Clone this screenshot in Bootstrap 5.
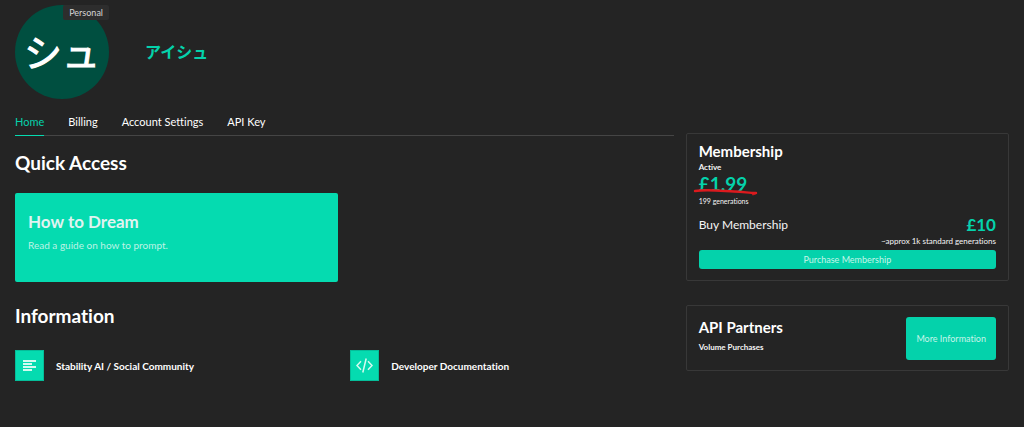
<!DOCTYPE html>
<html lang="en" data-bs-theme="dark">
<head>
<meta charset="utf-8">
<meta name="viewport" content="width=device-width, initial-scale=1">
<title>Account</title>
<link href="https://cdn.jsdelivr.net/npm/bootstrap@5.3.0/dist/css/bootstrap.min.css" rel="stylesheet">
<style>
  :root { --accent: #05dbb0; --accent-deep: #04d2ab; --line: #383838; }
  body { background: #242424; color: #f5f5f5; font-family: Lato, "Noto Sans CJK JP", sans-serif; font-size: 11px; line-height: 16px; font-variant-ligatures: none; }
  .page { padding: 5px 15px; }
  .row { --bs-gutter-x: 12px; }
  .avatar { width: 94px; height: 94px; background: #004f40; color: #fff; font-size: 38px; font-weight: 400; line-height: 1; -webkit-text-stroke: 1px #fff; }
  .plan-tag { top: 0; right: 0; padding: 0 6px; background: #2d2d2d; color: #d4d4d4; font-size: 9px; line-height: 15px; border-radius: 2px; }
  .user-name { margin-left: 36px; color: var(--accent-deep); font-size: 16px; line-height: 20px; font-weight: 700; }
  .tabs { gap: 24px; border-bottom: 1px solid #454545; padding-top: 10px; }
  .tabs .nav-link { padding: 5px 0; color: #fff; font-size: 11px; line-height: 16px; border-bottom: 1px solid transparent; margin-bottom: -1px; transition: none; }
  .tabs .nav-link.active { color: var(--accent-deep); border-bottom-color: var(--accent); }
  h2 { font-size: 19px; line-height: 24px; font-weight: 700; color: #fff; }
  h3 { font-size: 15px; line-height: 20px; font-weight: 700; color: #fff; }
  .access { margin-top: 15px; }
  .access h2 { margin-bottom: 18px; }
  .quick { background: var(--accent); border-radius: 2px; padding: 18px 13px; min-height: 89px; color: #bdf3e5; font-size: 10px; }
  .quick:hover { color: #fff; }
  .quick h3 { color: #e0f3f1; font-size: 17px; line-height: 22px; }
  .resources { margin-top: 22px; }
  .resources h2 { margin-bottom: 22px; }
  .info { gap: 12px; color: #fff; font-size: 10px; line-height: 14px; font-weight: 700; }
  .info:hover { color: #fff; }
  .tile { width: 29px; height: 31px; background: var(--accent); box-shadow: inset 0 0 0 1px #05bd99; color: #d5faf0; }
  .side { padding-top: 34px; }
  .panel { border: 1px solid var(--line); border-radius: 2px; padding: 7px 12px 11px; }
  .panel.partners { padding: 11px 12px 10px; }
  .fine { font-size: 8px; line-height: 12px; }
  .quota { font-size: 7px; }
  .buy { font-size: 12px; }
  .price { color: var(--accent-deep); font-weight: 700; font-size: 17px; line-height: 20px; }
  .balance { width: max-content; font-size: 19px; line-height: 22px; }
  .scribble { left: -6px; top: 15px; width: 66px; height: 8px; }
  .btn-mint { background: var(--accent-deep); color: #c5f5e9; border: 0; border-radius: 3px; font-size: 9px; line-height: 15px; padding: 2px 10px; font-variant-ligatures: none; }
  .btn-mint:hover { background: var(--accent); color: #fff; }
  .btn-buy { margin-top: 3px; }
  .btn-tall { padding: 14px 10px; }
</style>
</head>
<body>
<main class="container-fluid page">
  <header class="d-flex align-items-center">
    <div class="position-relative">
      <div class="avatar rounded-circle d-flex align-items-center justify-content-center">シュ</div>
      <span class="plan-tag position-absolute">Personal</span>
    </div>
    <h1 class="user-name mb-0">アイシュ</h1>
  </header>
  <div class="row">
    <div class="col-8">
      <nav class="nav tabs" aria-label="Account">
        <a class="nav-link active" aria-current="page" href="#">Home</a>
        <a class="nav-link" href="#">Billing</a>
        <a class="nav-link" href="#">Account Settings</a>
        <a class="nav-link" href="#">API Key</a>
      </nav>
      <section class="access">
        <h2>Quick Access</h2>
        <div class="row">
          <div class="col-6">
            <a class="quick d-block text-decoration-none" href="#">
              <h3 class="mb-1">How to Dream</h3>
              <p class="mb-0">Read a guide on how to prompt.</p>
            </a>
          </div>
        </div>
      </section>
      <section class="resources">
        <h2>Information</h2>
        <div class="row">
          <div class="col-6">
            <a class="info d-flex align-items-center text-decoration-none" href="#">
              <span class="tile d-flex align-items-center justify-content-center">
                <svg width="13" height="12" viewBox="0 0 13 12" fill="currentColor" aria-hidden="true"><path d="M0 0h13v2H0zM0 3h9v2H0zM0 6h13v2H0zM0 9h9v2H0z"/></svg>
              </span>
              Stability AI / Social Community
            </a>
          </div>
          <div class="col-6">
            <a class="info d-flex align-items-center text-decoration-none" href="#">
              <span class="tile d-flex align-items-center justify-content-center">
                <svg width="17" height="15" viewBox="0 0 17 15" fill="none" stroke="currentColor" stroke-width="1.5" aria-hidden="true"><path d="M5 3.3L1 7.5l4 4.2M12 3.3l4 4.2-4 4.2M10.2.5L6.8 14.5"/></svg>
              </span>
              Developer Documentation
            </a>
          </div>
        </div>
      </section>
    </div>
    <aside class="col-4 side">
      <section class="panel mb-4">
        <h3 class="mb-0">Membership</h3>
        <div class="fine fw-bold">Active</div>
        <div class="position-relative price balance">£1.99
          <svg class="scribble position-absolute" viewBox="0 0 66 8" fill="none" stroke="#dc1a1e" stroke-width="2.4" stroke-linecap="round" aria-hidden="true"><path d="M2 3C14 1 30 3 41 3.500S56 5 63 5M60 6L63 5"/></svg>
        </div>
        <div class="fine quota">199 generations</div>
        <div class="d-flex justify-content-between align-items-center mt-2">
          <span class="buy">Buy Membership</span>
          <span class="price">£10</span>
        </div>
        <div class="fine text-end">~approx 1k standard generations</div>
        <button type="button" class="btn btn-mint btn-buy w-100">Purchase Membership</button>
      </section>
      <section class="panel partners d-flex justify-content-between align-items-start">
        <div>
          <h3 class="mb-1">API Partners</h3>
          <div class="fine fw-bold">Volume Purchases</div>
        </div>
        <button type="button" class="btn btn-mint btn-tall">More Information</button>
      </section>
    </aside>
  </div>
</main>
<script src="https://cdn.jsdelivr.net/npm/bootstrap@5.3.0/dist/js/bootstrap.bundle.min.js"></script>
</body>
</html>
